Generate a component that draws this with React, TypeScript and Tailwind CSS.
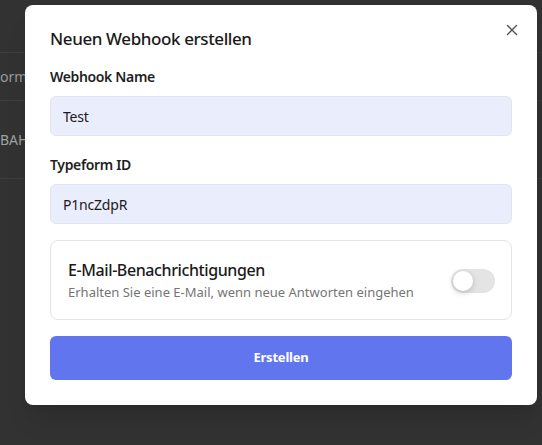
import React, { useState } from "react";

const font = { fontFamily: '"Noto Sans", "Open Sans", sans-serif' };

const Field = ({ label, value, className }: { label: string; value: string; className?: string }) => (
  <div className={className}>
    <label className="block text-[14px] leading-[20px] font-semibold tracking-[-0.35px] text-[#1f1f1f]">{label}</label>
    <input
      readOnly
      value={value}
      className="mt-[9px] block h-[40px] w-full rounded-md border border-[#e3e4ee] bg-[#eaedfb] px-[12px] text-[14px] tracking-[-0.2px] text-[#1a1a1a] outline-none"
    />
  </div>
);

const App = () => {
  const [notify, setNotify] = useState(false);

  return (
    <div className="relative h-[445px] w-[542px] overflow-hidden bg-[#313231]" style={font}>
      {/* page behind the overlay */}
      <div className="flex flex-col text-[14px] text-[#9a9a9a]">
        <div className="h-[53px] border-b border-[#3b3c3b]" />
        <div className="flex h-[48px] items-center border-b border-[#3b3c3b]">
          <span className="whitespace-nowrap">orm</span>
        </div>
        <div className="flex h-[78px] items-center border-b border-[#3b3c3b]">
          <span className="whitespace-nowrap text-[#a0a0a0]">BAH</span>
        </div>
      </div>

      {/* modal */}
      <div className="absolute left-[25px] top-[5px] w-[512px] rounded-lg bg-white px-[25px] pt-[20px] pb-[25px] shadow-xl">
        <button className="absolute right-[13px] top-[13px] flex h-[24px] w-[24px] items-center justify-center text-[#555]">
          <svg width="12" height="12" viewBox="0 0 12 12" fill="none" stroke="currentColor" strokeWidth="1.4" strokeLinecap="round">
            <path d="M1.5 1.5l9 9M10.5 1.5l-9 9" />
          </svg>
        </button>

        <h2 className="text-[17px] leading-[28px] font-medium tracking-[-0.4px] text-[#1a1a1a]">Neuen Webhook erstellen</h2>

        <Field className="mt-[14px]" label="Webhook Name" value="Test" />
        <Field className="mt-[19px]" label="Typeform ID" value="P1ncZdpR" />

        <div className="mt-[16px] flex h-[80px] items-center justify-between rounded-lg border border-[#e4e4e4] pl-[17px] pr-[16px]">
          <div className="pt-[1px]">
            <div className="text-[16px] leading-[22px] font-medium tracking-[-0.4px] text-[#1a1a1a]">E-Mail-Benachrichtigungen</div>
            <div className="mt-[1px] text-[13px] leading-[20px] text-[#757575]">
              Erhalten Sie eine E-Mail, wenn neue Antworten eingehen
            </div>
          </div>
          <button
            onClick={() => setNotify((v) => !v)}
            className={`mt-[2px] flex h-[24px] w-[44px] items-center rounded-full p-[2px] ${notify ? "bg-[#6175ee]" : "bg-[#e4e4e4]"}`}
          >
            <span
              className={`h-[20px] w-[20px] rounded-full bg-white shadow-[0_2px_6px_rgba(0,0,0,0.18)] ${notify ? "translate-x-[20px]" : ""}`}
            />
          </button>
        </div>

        <button className="mt-[16px] flex h-[44px] w-full items-center justify-center rounded-md bg-[#6175ee] text-[13px] font-bold tracking-[-0.2px] text-white">
          Erstellen
        </button>
      </div>
    </div>
  );
};

export default App;
